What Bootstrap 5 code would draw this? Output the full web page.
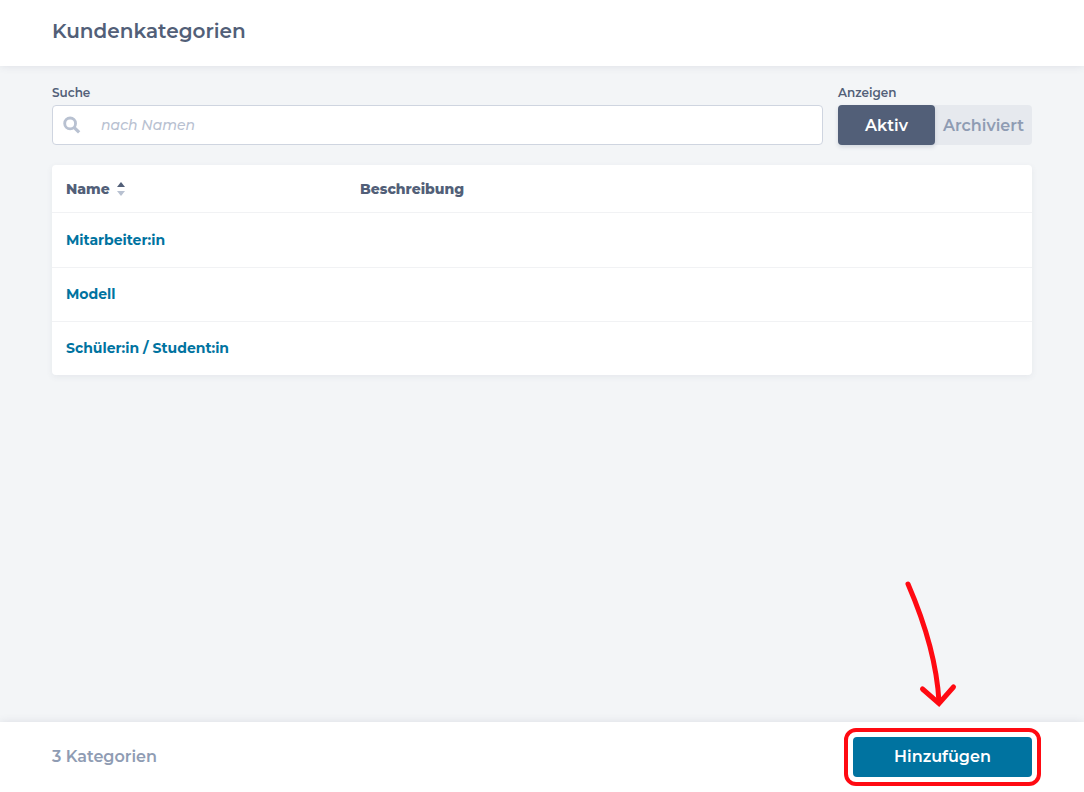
<!DOCTYPE html>
<html lang="de">
<head>
<meta charset="utf-8">
<meta name="viewport" content="width=device-width, initial-scale=1">
<title>Kundenkategorien</title>
<link href="https://cdn.jsdelivr.net/npm/bootstrap@5.3.0/dist/css/bootstrap.min.css" rel="stylesheet">
<style>
  :root { --ink: #525f78; --muted: #8f9cb3; --pale: #b8c1d1; --brand: #0073a0; --line: #f1f2f4; --mark: #ff0a12; }
  body { font-family: Montserrat, Inter, sans-serif; color: var(--ink); background: #f3f5f7; }
  .gutter { padding-left: 52px; padding-right: 52px; }
  .page-head { height: 66px; box-shadow: 0 0 8px rgba(82, 95, 120, .14); }
  .page-head h1 { font-size: 20px; line-height: 28px; font-weight: 600; }
  .field-label { font-size: 12px; line-height: 16px; font-weight: 600; margin-bottom: 4px; }
  .filters { gap: 15px; padding-top: 19px; padding-bottom: 20px; }
  .search-box { height: 40px; border: 1px solid #cfd5e0; border-radius: 4px; padding-left: 10px; gap: 20px; }
  .search-box input { font-size: 14px; line-height: 20px; color: var(--ink); }
  .search-box input::placeholder { color: var(--pale); font-style: italic; font-weight: 500; opacity: 1; }
  .search-box input:focus { box-shadow: none; }
  .toggle-wrap { width: 194px; }
  .toggle { background: #e6e9ee; border-radius: 4px; }
  .toggle .btn { flex: 1 1 0; height: 40px; padding: 1px 0 0; border: 0; border-radius: 4px; font-size: 16px; line-height: 24px; font-weight: 600; color: var(--muted); }
  .toggle .btn.active { background: var(--ink); color: #fff; box-shadow: 0 2px 4px rgba(82, 95, 120, .2); }
  .list-card { border-radius: 4px; box-shadow: 0 2px 6px rgba(82, 95, 120, .08); }
  .list-card table { table-layout: fixed; border-collapse: separate; border-spacing: 0; font-size: 14px; line-height: 20px; }
  .list-card th, .list-card td { padding: 0 14px; vertical-align: middle; }
  .list-card thead th { height: 48px; font-weight: 800; border-bottom: 1px solid var(--line); }
  .list-card tbody td { height: 54px; padding-bottom: 1px; }
  .list-card tbody tr + tr td { border-top: 1px solid var(--line); }
  .list-card a { color: var(--brand); font-weight: 700; }
  .col-name { width: 30%; }
  .sort { font: inherit; color: inherit; gap: 7px; }
  .page-foot { height: 70px; box-shadow: 0 0 8px rgba(82, 95, 120, .14); }
  .total { font-size: 16px; line-height: 24px; font-weight: 600; color: var(--muted); }
  .btn-add { width: 179px; height: 40px; padding: 0; border: 0; border-radius: 4px; font-size: 16px; font-weight: 600; color: #fff; background: var(--brand); }
  .btn-add:hover { color: #fff; background: #00648b; }
  .hint-ring { position: absolute; inset: -9px; border: 4px solid var(--mark); border-radius: 12px; pointer-events: none; }
  .hint-arrow { position: absolute; right: 72px; bottom: 68px; pointer-events: none; }
</style>
</head>
<body class="d-flex flex-column min-vh-100">
  <header class="page-head gutter bg-white d-flex align-items-center">
    <h1 class="m-0 pb-1">Kundenkategorien</h1>
  </header>

  <main class="gutter flex-grow-1">
    <form class="filters d-flex">
      <div class="flex-grow-1">
        <label class="field-label d-block" for="q">Suche</label>
        <div class="search-box bg-white d-flex align-items-center">
          <svg width="19" height="19" viewBox="0 0 19 19" fill="none" stroke="#b8c1d1" stroke-width="3" aria-hidden="true"><circle cx="7.500" cy="7.300" r="5.700"/><path d="M11.600 11.400l5.400 5.400" stroke-width="3.400"/></svg>
          <input class="form-control border-0 bg-transparent p-0" id="q" type="text" placeholder="nach Namen">
        </div>
      </div>
      <div class="toggle-wrap flex-shrink-0" role="group" aria-labelledby="show-label">
        <div class="field-label" id="show-label">Anzeigen</div>
        <div class="toggle d-flex">
          <button type="button" class="btn active" aria-pressed="true">Aktiv</button>
          <button type="button" class="btn" aria-pressed="false">Archiviert</button>
        </div>
      </div>
    </form>

    <div class="list-card bg-white">
      <table class="w-100">
        <thead>
          <tr>
            <th class="col-name" scope="col">
              <button type="button" class="sort border-0 bg-transparent p-0 d-flex align-items-center">Name
                <svg width="8" height="14" viewBox="0 0 8 14" aria-hidden="true"><path d="M4 0l4 5H0z" fill="#525f78"/><path d="M4 14L0 9h8z" fill="#b8c1d1"/></svg>
              </button>
            </th>
            <th scope="col">Beschreibung</th>
          </tr>
        </thead>
        <tbody>
          <tr><td><a class="text-decoration-none" href="#">Mitarbeiter:in</a></td><td></td></tr>
          <tr><td><a class="text-decoration-none" href="#">Modell</a></td><td></td></tr>
          <tr><td><a class="text-decoration-none" href="#">Schüler:in / Student:in</a></td><td></td></tr>
        </tbody>
      </table>
    </div>
  </main>

  <footer class="page-foot gutter bg-white d-flex align-items-center justify-content-between">
    <span class="total">3 Kategorien</span>
    <div class="position-relative">
      <button type="button" class="btn btn-add d-block">Hinzufügen</button>
      <span class="hint-ring"></span>
      <svg class="hint-arrow" width="60" height="130" viewBox="900 579 60 130" fill="none" stroke="#ff0a12" stroke-width="5" stroke-linecap="round" aria-hidden="true"><path d="M908 584C924 621 937 664 939 702"/><path d="M922.500 689L939 703.500L953.500 687"/></svg>
    </div>
  </footer>
<script src="https://cdn.jsdelivr.net/npm/bootstrap@5.3.0/dist/js/bootstrap.bundle.min.js"></script>
</body>
</html>
